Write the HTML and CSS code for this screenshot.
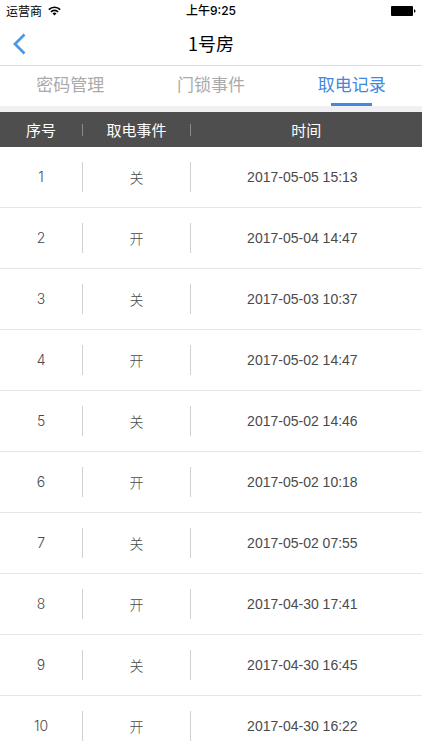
FILE: index.html
```html
<!DOCTYPE html>
<html lang="zh-CN">
<head>
  <meta charset="UTF-8" />
  <meta name="viewport" content="width=device-width, initial-scale=1.0"/>
  <title>1号房</title>
  <link rel="stylesheet" href="styles.css">
</head>
<body>

  <div class="status-bar">
    <div class="carrier">
      <span>运营商</span>
      <svg class="wifi" viewBox="0 0 13 10" aria-hidden="true">
        <path d="M.8 3.600a8.100 8.100 0 0 1 11.400 0M2.900 5.900a5.100 5.100 0 0 1 7.200 0" fill="none" stroke="#000" stroke-width="1.600"/>
        <path d="M4.500 7.500a2.800 2.800 0 0 1 4 0l-2 2.100z" fill="#000"/>
      </svg>
    </div>
    <span class="clock">上午9:25</span>
    <div class="power">
      <svg class="battery" viewBox="0 0 25 10" aria-hidden="true">
        <rect width="22" height="10" rx="1" fill="#000"/>
        <path d="M23 3.200c1 .3 1.500.9 1.500 1.800s-.5 1.500-1.500 1.800z" fill="#000"/>
      </svg>
    </div>
  </div>

  <header class="nav">
    <button class="back" type="button" aria-label="返回">
      <svg viewBox="0 0 14 22" aria-hidden="true">
        <path d="M12.500 1.500L3 11l9.500 9.500" fill="none" stroke="#4a98e8" stroke-width="2.800"/>
      </svg>
    </button>
    <h1>1号房</h1>
  </header>

  <nav class="tabs">
    <a href="#password">密码管理</a>
    <a href="#lock">门锁事件</a>
    <a href="#power" class="active" aria-current="page">取电记录</a>
  </nav>

  <main class="records">
    <table>
      <thead>
        <tr><th class="col-no"><span>序号</span></th><th class="col-event"><span>取电事件</span></th><th>时间</th></tr>
      </thead>
      <tbody>
        <tr><td class="no"><span>1</span></td><td><span>关</span></td><td class="time">2017-05-05 15:13</td></tr>
        <tr><td class="no"><span>2</span></td><td><span>开</span></td><td class="time">2017-05-04 14:47</td></tr>
        <tr><td class="no"><span>3</span></td><td><span>关</span></td><td class="time">2017-05-03 10:37</td></tr>
        <tr><td class="no"><span>4</span></td><td><span>开</span></td><td class="time">2017-05-02 14:47</td></tr>
        <tr><td class="no"><span>5</span></td><td><span>关</span></td><td class="time">2017-05-02 14:46</td></tr>
        <tr><td class="no"><span>6</span></td><td><span>开</span></td><td class="time">2017-05-02 10:18</td></tr>
        <tr><td class="no"><span>7</span></td><td><span>关</span></td><td class="time">2017-05-02 07:55</td></tr>
        <tr><td class="no"><span>8</span></td><td><span>开</span></td><td class="time">2017-04-30 17:41</td></tr>
        <tr><td class="no"><span>9</span></td><td><span>关</span></td><td class="time">2017-04-30 16:45</td></tr>
        <tr><td class="no"><span>10</span></td><td><span>开</span></td><td class="time">2017-04-30 16:22</td></tr>
      </tbody>
    </table>
  </main>

</body>
</html>
```
FILE: styles.css
```css
* {
  box-sizing: border-box;
}
body {
  margin: 0;
  height: 100vh;
  display: flex;
  flex-direction: column;
  font-family: "Noto Sans CJK SC", sans-serif;
  background: #fff;
  color: #000;
}
.status-bar {
  display: grid;
  grid-template-columns: 1fr auto 1fr;
  align-items: center;
  height: 22px;
  padding: 0 6px;
  font-size: 12px;
  line-height: 22px;
}
.carrier {
  display: flex;
  align-items: center;
  gap: 6px;
}
.wifi {
  width: 13px;
  height: 10px;
}
.clock {
  font-family: Inter, "Noto Sans CJK SC", sans-serif;
  font-weight: 500;
}
.power {
  display: flex;
  justify-content: flex-end;
}
.battery {
  width: 25px;
  height: 10px;
}
.nav {
  display: grid;
  grid-template-columns: 48px 1fr 48px;
  align-items: center;
  height: 44px;
  border-bottom: 1px solid #dcdcdc;
}
.back {
  display: flex;
  padding: 0 12px;
  border: none;
  background: none;
  cursor: pointer;
}
.back svg {
  width: 14px;
  height: 22px;
}
h1 {
  margin: 0;
  padding-bottom: 2px;
  font-size: 18px;
  font-weight: 400;
  line-height: 40px;
  text-align: center;
}
.tabs {
  display: flex;
  height: 46px;
  border-bottom: 6px solid #f0f0f2;
}
.tabs a {
  flex: 1;
  display: flex;
  flex-direction: column;
  align-items: center;
  justify-content: space-between;
  font-size: 17px;
  line-height: 36px;
  color: #aaa;
  text-decoration: none;
}
.tabs .active {
  color: #4088e0;
}
.tabs .active::after {
  content: "";
  width: 41px;
  height: 3px;
  background: #4088e0;
}
.records {
  flex: 1;
  min-height: 0;
  overflow-y: auto;
  scrollbar-width: none;
}
table {
  width: 100%;
  table-layout: fixed;
  border-collapse: separate;
  border-spacing: 0;
  text-align: center;
}
.col-no {
  width: 19.7%;
}
.col-event {
  width: 25.5%;
}
th {
  height: 35px;
  padding: 0;
  background: #4e4e4e;
  color: #fff;
  font-size: 15px;
  font-weight: 400;
  line-height: 12px;
}
td {
  height: 61px;
  padding: 0;
  border-bottom: 1px solid #e6e6e6;
  color: #4a4a4a;
  font-size: 14px;
  font-weight: 300;
  line-height: 30px;
}
th span, td span {
  display: block;
  border-right: 1px solid #d0d0d0;
}
th span {
  border-color: #8a8a8a;
}
.no {
  font-family: Inter, sans-serif;
}
.time {
  padding-right: 8px;
  font-family: "Liberation Sans", sans-serif;
}
```
